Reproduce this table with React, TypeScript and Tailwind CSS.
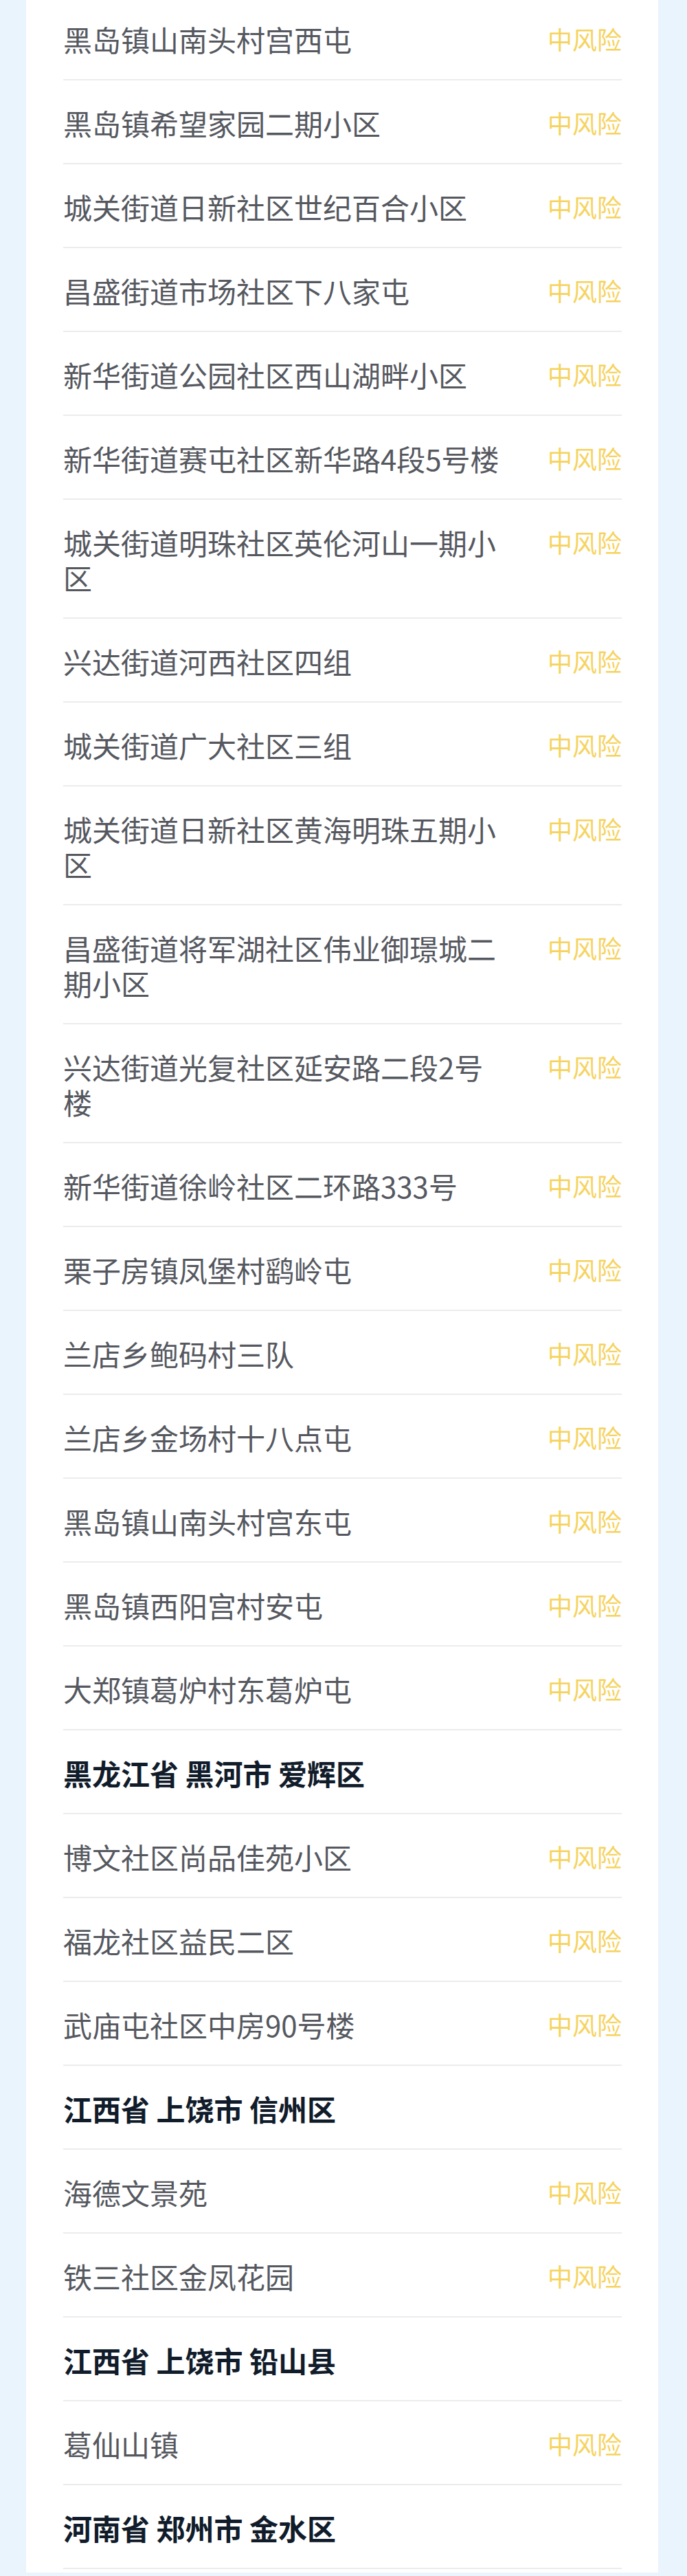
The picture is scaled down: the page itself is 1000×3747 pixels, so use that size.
type Row = { name: string; heading?: boolean };

const rows: Row[] = [
  { name: '黑岛镇山南头村宫西屯' },
  { name: '黑岛镇希望家园二期小区' },
  { name: '城关街道日新社区世纪百合小区' },
  { name: '昌盛街道市场社区下八家屯' },
  { name: '新华街道公园社区西山湖畔小区' },
  { name: '新华街道赛屯社区新华路4段5号楼' },
  { name: '城关街道明珠社区英伦河山一期小区' },
  { name: '兴达街道河西社区四组' },
  { name: '城关街道广大社区三组' },
  { name: '城关街道日新社区黄海明珠五期小区' },
  { name: '昌盛街道将军湖社区伟业御璟城二期小区' },
  { name: '兴达街道光复社区延安路二段2号楼' },
  { name: '新华街道徐岭社区二环路333号' },
  { name: '栗子房镇凤堡村鹞岭屯' },
  { name: '兰店乡鲍码村三队' },
  { name: '兰店乡金场村十八点屯' },
  { name: '黑岛镇山南头村宫东屯' },
  { name: '黑岛镇西阳宫村安屯' },
  { name: '大郑镇葛炉村东葛炉屯' },
  { name: '黑龙江省 黑河市 爱辉区', heading: true },
  { name: '博文社区尚品佳苑小区' },
  { name: '福龙社区益民二区' },
  { name: '武庙屯社区中房90号楼' },
  { name: '江西省 上饶市 信州区', heading: true },
  { name: '海德文景苑' },
  { name: '铁三社区金凤花园' },
  { name: '江西省 上饶市 铅山县', heading: true },
  { name: '葛仙山镇' },
  { name: '河南省 郑州市 金水区', heading: true },
];

function AreaRow({ row }: { row: Row }) {
  if (row.heading) {
    return (
      <div className="border-b-2 border-[#ececec] pt-[36px] pb-[33px]">
        <h3 className="text-[42px] leading-[51px] font-bold text-[#111c2b]">{row.name}</h3>
      </div>
    );
  }

  return (
    <div className="flex items-start justify-between border-b-2 border-[#ececec] pt-[36px] pb-[33px]">
      <p className="w-[645px] text-[42px] leading-[51px] text-[#55585f]">{row.name}</p>
      <span className="text-[36px] leading-[51px] text-[#f6d35e]">中风险</span>
    </div>
  );
}

export default function App() {
  return (
    <div
      className="min-h-[3747px] overflow-hidden bg-[#e9f4fc]"
      style={{ fontFamily: '"Noto Sans CJK SC", "Noto Sans", sans-serif' }}
    >
      <div className="ml-[38px] w-[920px] min-h-[3747px] bg-white pl-[54px] pr-[53px]">
        <div className="-mt-[5px]">
          {rows.map((row, i) => (
            <AreaRow key={i} row={row} />
          ))}
        </div>
      </div>
    </div>
  );
}
